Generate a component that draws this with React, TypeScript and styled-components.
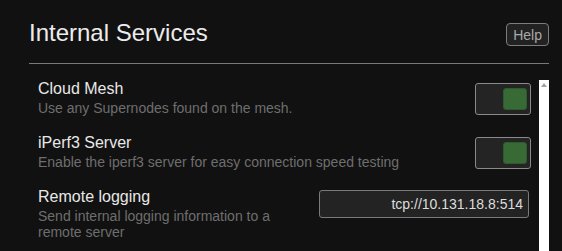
import React from "react";
import styled, { createGlobalStyle } from "styled-components";

const GlobalStyle = createGlobalStyle`
  html, body {
    margin: 0;
    padding: 0;
    background: #111111;
    overflow: hidden;
  }
  body {
    font-family: "Liberation Sans", Arial, sans-serif;
  }
`;

const Page = styled.div`
  height: 100vh;
  display: flex;
  flex-direction: column;
  padding: 0 13px 0 29px;
  box-sizing: border-box;
  background: #111111;
`;

const Header = styled.div`
  display: flex;
  justify-content: space-between;
  align-items: flex-end;
  padding-top: 19px;
  padding-bottom: 16px;
  border-bottom: 1px solid #7a7a7a;
`;

const Title = styled.h2`
  margin: 0;
  font-size: 24px;
  line-height: 28px;
  font-weight: 400;
  color: #ececec;
`;

const HelpButton = styled.button`
  margin: 0 0 1px 0;
  height: 23px;
  padding: 0 6px;
  font-family: "Liberation Sans", Arial, sans-serif;
  font-size: 14px;
  color: #a9a9a9;
  background: #222222;
  border: 1px solid #7d7d7d;
  border-radius: 4px;
  cursor: pointer;
`;

const Body = styled.div`
  flex: 1;
  display: flex;
  margin-top: 16px;
  min-height: 0;
`;

const List = styled.div`
  flex: 1;
  display: flex;
  flex-direction: column;
  gap: 18px;
  padding: 0 8px 0 9px;
`;

const Row = styled.div`
  display: flex;
  align-items: flex-start;
  gap: 40px;
`;

const Info = styled.div`
  flex: 1;
  min-width: 0;
`;

const Label = styled.div`
  font-size: 16px;
  line-height: 18px;
  color: #e8e8e8;
`;

const Desc = styled.div`
  margin-top: 2px;
  font-size: 14px;
  line-height: 16px;
  color: #6e6e6e;
`;

const Toggle = styled.div<{ $on?: boolean }>`
  flex: none;
  margin-top: 3px;
  width: 56px;
  height: 32px;
  box-sizing: border-box;
  border: 1px solid #8a8a8a;
  border-radius: 3px;
  background: #242424;
  display: flex;
  align-items: center;
  justify-content: ${(p) => (p.$on ? "flex-end" : "flex-start")};
  padding: 0 3px 0 4px;
`;

const Knob = styled.div`
  width: 24px;
  height: 22px;
  box-sizing: border-box;
  border-radius: 3px;
  background: #386a36;
  border: 1px solid #2f5a2e;
`;

const TextInput = styled.input`
  flex: none;
  margin: 2px 2px 0 0;
  width: 210px;
  height: 28px;
  box-sizing: border-box;
  padding: 0 5px;
  font-family: "Liberation Sans", Arial, sans-serif;
  font-size: 14px;
  color: #dddddd;
  text-align: right;
  background: #232323;
  border: 1px solid #7a7a7a;
  border-radius: 3px;
  outline: none;
`;

const ScrollTrack = styled.div`
  flex: none;
  width: 10px;
  background: #ffffff;
  display: flex;
  justify-content: center;
  padding-top: 3px;
  box-sizing: border-box;
`;

const ArrowUp = styled.div`
  width: 0;
  height: 0;
  border-left: 3px solid transparent;
  border-right: 3px solid transparent;
  border-bottom: 4px solid #a3a3a3;
`;

type Item = {
  label: string;
  desc: string;
  kind: "toggle" | "text";
  value?: string;
};

const items: Item[] = [
  { label: "Cloud Mesh", desc: "Use any Supernodes found on the mesh.", kind: "toggle" },
  {
    label: "iPerf3 Server",
    desc: "Enable the iperf3 server for easy connection speed testing",
    kind: "toggle",
  },
  {
    label: "Remote logging",
    desc: "Send internal logging information to a remote server",
    kind: "text",
    value: "tcp://10.131.18.8:514",
  },
];

const App = () => {
  return (
    <>
      <GlobalStyle />
      <Page>
        <Header>
          <Title>Internal Services</Title>
          <HelpButton>Help</HelpButton>
        </Header>
        <Body>
          <List>
            {items.map((item) => (
              <Row key={item.label}>
                <Info>
                  <Label>{item.label}</Label>
                  <Desc>{item.desc}</Desc>
                </Info>
                {item.kind === "toggle" ? (
                  <Toggle $on>
                    <Knob />
                  </Toggle>
                ) : (
                  <TextInput defaultValue={item.value} />
                )}
              </Row>
            ))}
          </List>
          <ScrollTrack>
            <ArrowUp />
          </ScrollTrack>
        </Body>
      </Page>
    </>
  );
};

export default App;
